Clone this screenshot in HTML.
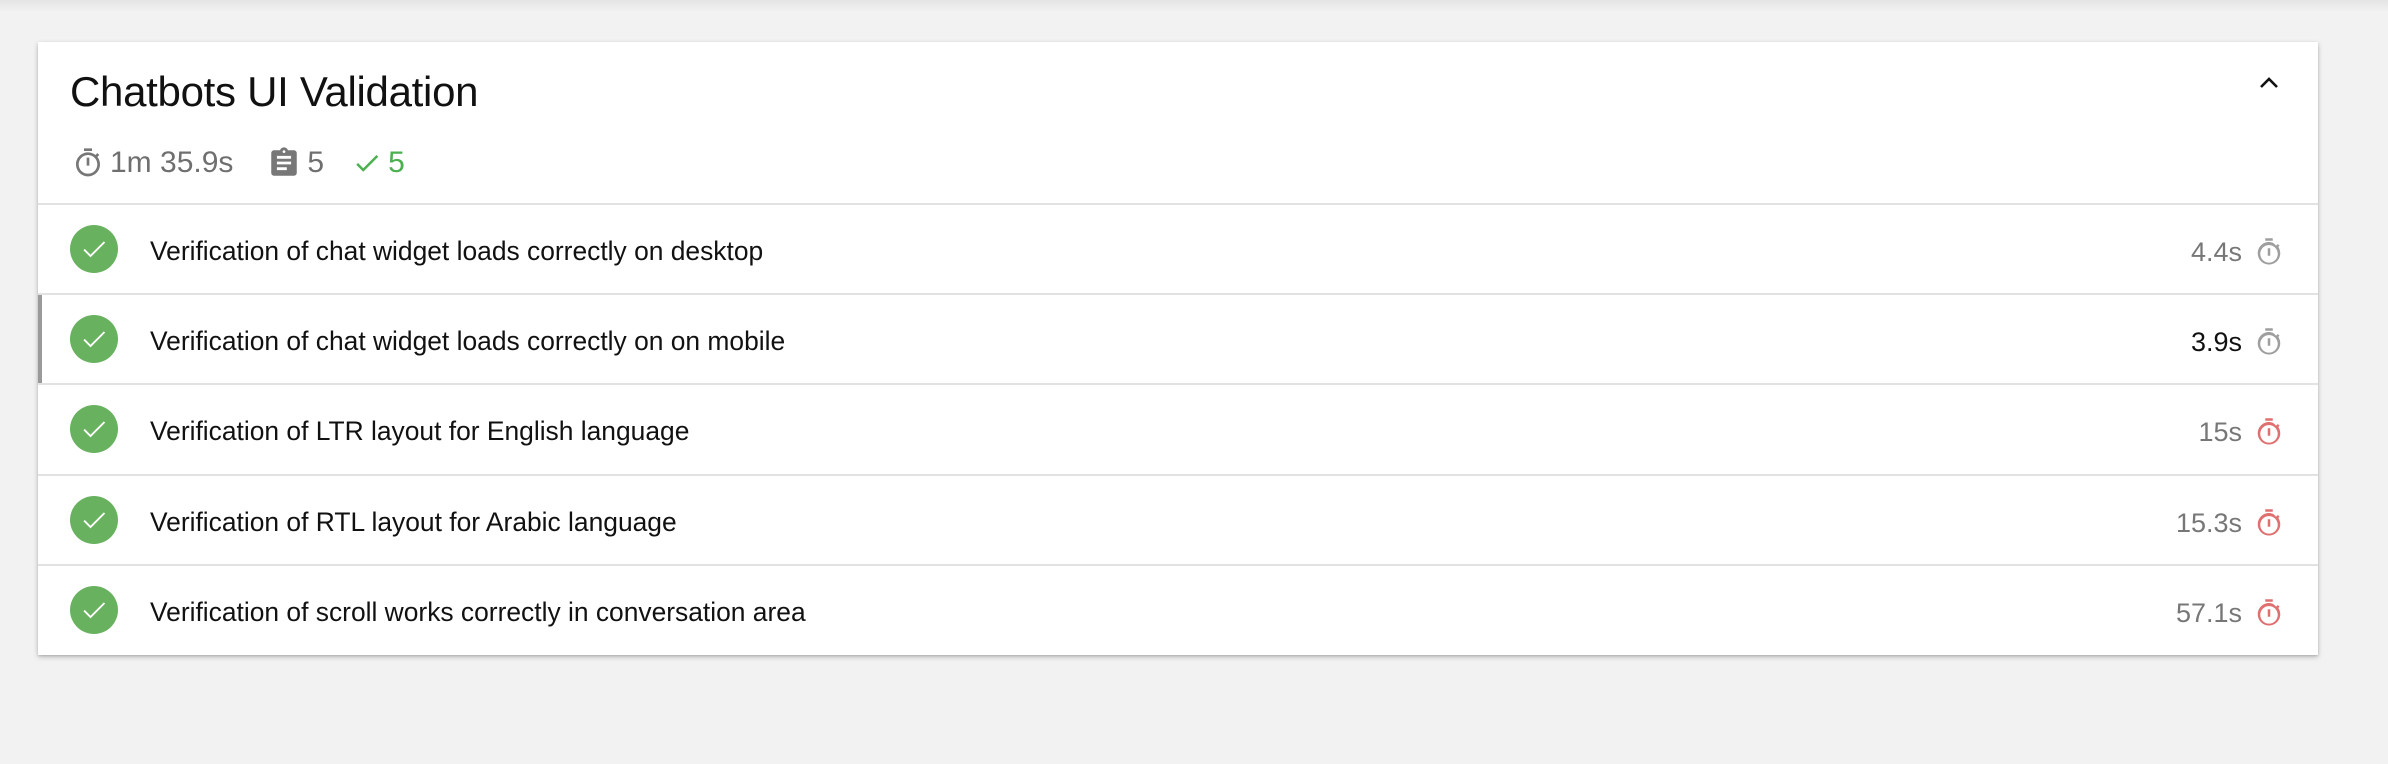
<!DOCTYPE html>
<html><head><meta charset="utf-8"><style>
*{margin:0;padding:0;box-sizing:border-box}
html,body{width:2388px;height:764px;overflow:hidden;background:#f2f2f2;font-family:"Liberation Sans",Arial,sans-serif}
.topsh{position:absolute;left:0;top:0;width:2388px;height:12px;background:linear-gradient(#e4e4e4,#f2f2f2)}
.card{position:absolute;left:38px;top:42px;width:2280px;height:613px;background:#fff;box-shadow:0 2px 5px rgba(0,0,0,.22),0 1px 2px rgba(0,0,0,.12)}
.title{position:absolute;left:32px;top:26px;font-size:42px;color:#111;letter-spacing:-0.3px}
.chev{position:absolute;left:2221px;top:34px}
.stats{position:absolute;left:34px;top:103px;height:36px;display:flex;align-items:center;font-size:30px;color:#6f6f6f}
.stats svg{display:block}
.sep{position:absolute;left:0;width:2280px;height:2px;background:#e2e2e2}
.row{position:absolute;left:0;width:2280px;height:88px}
.row .c{position:absolute;left:32px;top:20px;width:48px;height:48px;border-radius:50%;background:#68b25f}
.row .c svg{position:absolute;left:10px;top:10px}
.row .t{position:absolute;left:112px;top:31px;font-size:26.4px;color:#111;white-space:nowrap}
.row .d{position:absolute;right:76px;top:32px;font-size:27px;color:#777}
.row .i{position:absolute;left:2216px;top:32px}
.bar{position:absolute;left:0;top:0;width:4px;height:88px;background:#9a9a9a}
</style></head><body>
<div class="topsh"></div>
<div class="card">
<div class="title">Chatbots UI Validation</div>
<svg class="chev" width="20" height="14" viewBox="0 0 20 14"><path d="M2 11 L10 3 L18 11" fill="none" stroke="#111" stroke-width="2.6"/></svg>
<div class="stats">
<svg width="32" height="32" viewBox="0 0 24 24"><path fill="#777" d="M15 1H9v2h6V1zm-4 13h2V8h-2v6zm8.03-6.61l1.42-1.42c-.43-.51-.9-.99-1.41-1.41l-1.42 1.42C16.07 4.74 14.12 4 12 4c-4.97 0-9 4.03-9 9s4.02 9 9 9 9-4.03 9-9c0-2.12-.74-4.07-1.97-5.61zM12 20c-3.87 0-7-3.13-7-7s3.13-7 7-7 7 3.13 7 7-3.13 7-7 7z"/></svg>
<span style="margin-left:6px">1m 35.9s</span>
<svg style="margin-left:34px" width="34" height="34" viewBox="0 0 24 24"><path fill="#777" d="M19 3h-4.18C14.4 1.84 13.3 1 12 1c-1.3 0-2.4.84-2.82 2H5c-1.1 0-2 .9-2 2v14c0 1.1.9 2 2 2h14c1.1 0 2-.9 2-2V5c0-1.1-.9-2-2-2zm-7 0c.55 0 1 .45 1 1s-.45 1-1 1-1-.45-1-1 .45-1 1-1zm2 14H7v-2h7v2zm3-4H7v-2h10v2zm0-4H7V7h10v2z"/></svg>
<span style="margin-left:6px">5</span>
<svg style="margin-left:28px" width="30" height="30" viewBox="0 0 24 24"><path fill="#4caf50" d="M9 16.17L4.83 12l-1.42 1.41L9 19 21 7l-1.41-1.41z"/></svg>
<span style="margin-left:6px;color:#4caf50">5</span>
</div>

<div class="sep" style="top:161px"></div>
<div class="row" style="top:163px"><div class="c"><svg width="28" height="28" viewBox="0 0 24 24"><path fill="none" stroke="#fff" stroke-width="1.6" d="M3.5 12.5 L9 18 L21 6"/></svg></div><div class="t">Verification of chat widget loads correctly on desktop</div><div class="d">4.4s</div><svg class="i" width="30" height="30" viewBox="0 0 24 24"><path fill="#9e9e9e" d="M15 1H9v2h6V1zm-4 14h2V9h-2v6zm8.03-6.61l1.42-1.42c-.43-.51-.9-.99-1.41-1.41l-1.42 1.42C16.07 4.74 14.12 4 12 4c-4.97 0-9 4.03-9 9s4.02 9 9 9 9-4.03 9-9c0-2.12-.74-4.07-1.97-5.61zM12 20.5c-3.87 0-7-3.13-7-7s3.13-7 7-7 7 3.13 7 7-3.13 7-7 7z"/></svg></div>
<div class="sep" style="top:251px"></div>
<div class="row" style="top:253px"><div class="bar"></div><div class="c"><svg width="28" height="28" viewBox="0 0 24 24"><path fill="none" stroke="#fff" stroke-width="1.6" d="M3.5 12.5 L9 18 L21 6"/></svg></div><div class="t">Verification of chat widget loads correctly on on mobile</div><div class="d" style="color:#111">3.9s</div><svg class="i" width="30" height="30" viewBox="0 0 24 24"><path fill="#9e9e9e" d="M15 1H9v2h6V1zm-4 14h2V9h-2v6zm8.03-6.61l1.42-1.42c-.43-.51-.9-.99-1.41-1.41l-1.42 1.42C16.07 4.74 14.12 4 12 4c-4.97 0-9 4.03-9 9s4.02 9 9 9 9-4.03 9-9c0-2.12-.74-4.07-1.97-5.61zM12 20.5c-3.87 0-7-3.13-7-7s3.13-7 7-7 7 3.13 7 7-3.13 7-7 7z"/></svg></div>
<div class="sep" style="top:341px"></div>
<div class="row" style="top:343px"><div class="c"><svg width="28" height="28" viewBox="0 0 24 24"><path fill="none" stroke="#fff" stroke-width="1.6" d="M3.5 12.5 L9 18 L21 6"/></svg></div><div class="t">Verification of LTR layout for English language</div><div class="d">15s</div><svg class="i" width="30" height="30" viewBox="0 0 24 24"><path fill="#e07070" d="M15 1H9v2h6V1zm-4 14h2V9h-2v6zm8.03-6.61l1.42-1.42c-.43-.51-.9-.99-1.41-1.41l-1.42 1.42C16.07 4.74 14.12 4 12 4c-4.97 0-9 4.03-9 9s4.02 9 9 9 9-4.03 9-9c0-2.12-.74-4.07-1.97-5.61zM12 20.5c-3.87 0-7-3.13-7-7s3.13-7 7-7 7 3.13 7 7-3.13 7-7 7z"/></svg></div>
<div class="sep" style="top:432px"></div>
<div class="row" style="top:434px"><div class="c"><svg width="28" height="28" viewBox="0 0 24 24"><path fill="none" stroke="#fff" stroke-width="1.6" d="M3.5 12.5 L9 18 L21 6"/></svg></div><div class="t">Verification of RTL layout for Arabic language</div><div class="d">15.3s</div><svg class="i" width="30" height="30" viewBox="0 0 24 24"><path fill="#e07070" d="M15 1H9v2h6V1zm-4 14h2V9h-2v6zm8.03-6.61l1.42-1.42c-.43-.51-.9-.99-1.41-1.41l-1.42 1.42C16.07 4.74 14.12 4 12 4c-4.97 0-9 4.03-9 9s4.02 9 9 9 9-4.03 9-9c0-2.12-.74-4.07-1.97-5.61zM12 20.5c-3.87 0-7-3.13-7-7s3.13-7 7-7 7 3.13 7 7-3.13 7-7 7z"/></svg></div>
<div class="sep" style="top:522px"></div>
<div class="row" style="top:524px"><div class="c"><svg width="28" height="28" viewBox="0 0 24 24"><path fill="none" stroke="#fff" stroke-width="1.6" d="M3.5 12.5 L9 18 L21 6"/></svg></div><div class="t">Verification of scroll works correctly in conversation area</div><div class="d">57.1s</div><svg class="i" width="30" height="30" viewBox="0 0 24 24"><path fill="#e07070" d="M15 1H9v2h6V1zm-4 14h2V9h-2v6zm8.03-6.61l1.42-1.42c-.43-.51-.9-.99-1.41-1.41l-1.42 1.42C16.07 4.74 14.12 4 12 4c-4.97 0-9 4.03-9 9s4.02 9 9 9 9-4.03 9-9c0-2.12-.74-4.07-1.97-5.61zM12 20.5c-3.87 0-7-3.13-7-7s3.13-7 7-7 7 3.13 7 7-3.13 7-7 7z"/></svg></div>
</div>
</body></html>
